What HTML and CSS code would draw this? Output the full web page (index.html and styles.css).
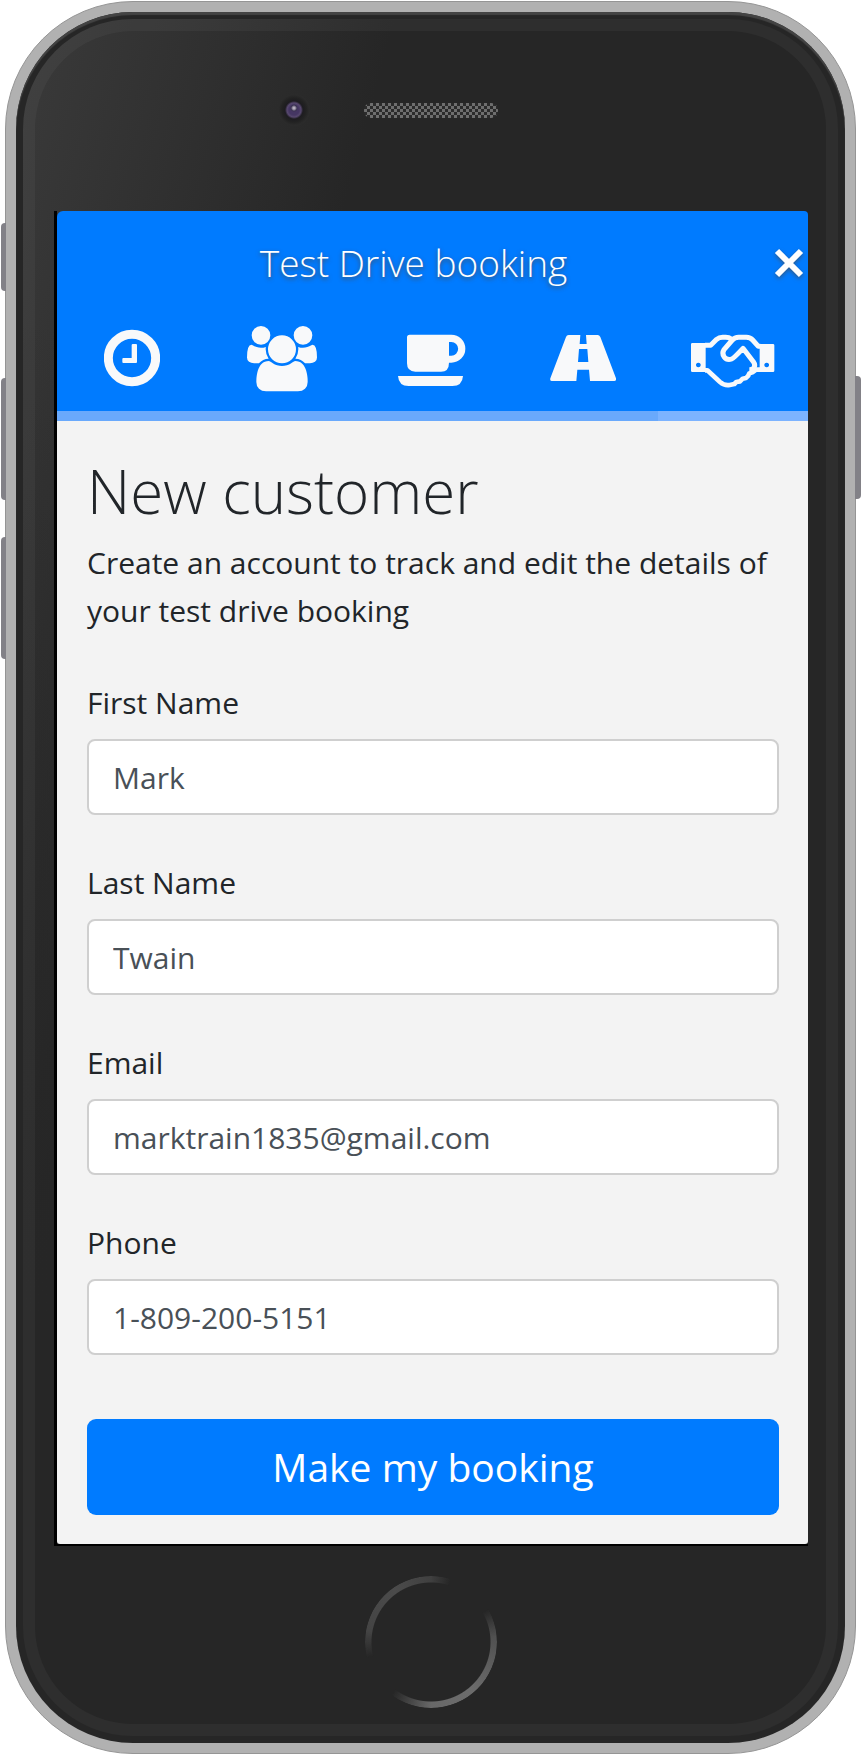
FILE: index.html
```
<!DOCTYPE html>
<html lang="en">
<head>
<meta charset="utf-8">
<meta name="viewport" content="width=device-width, initial-scale=1">
<title>Test Drive booking</title>
<link rel="stylesheet" href="styles.css">
</head>
<body>
<div class="phone">
  <span class="side-key key-mute"></span>
  <span class="side-key key-up"></span>
  <span class="side-key key-down"></span>
  <span class="side-key key-power"></span>
  <div class="shell">
    <div class="face">
      <div class="bezel-top">
        <span class="camera"></span>
        <svg class="speaker" viewBox="0 0 134 15" aria-hidden="true">
          <defs><pattern id="mesh" width="6" height="6" patternUnits="userSpaceOnUse"><rect width="6" height="6" fill="#2b2b2b"/><rect width="3" height="3" fill="#6e6e6e"/><rect x="3" y="3" width="3" height="3" fill="#6e6e6e"/></pattern></defs>
          <rect width="134" height="15" rx="7" fill="url(#mesh)"/>
        </svg>
      </div>
      <div class="screen">
        <header class="header">
          <div class="title-row">
            <h1 class="title">Test Drive booking</h1>
            <button class="close" type="button" aria-label="Close">
              <svg width="30" height="30" viewBox="0 0 30 30" aria-hidden="true"><path d="M3 3L27 27M27 3L3 27" stroke="#fff" stroke-width="6"/></svg>
            </button>
          </div>
          <div class="steps">
            <svg width="56" height="66" viewBox="192 378 168 198" aria-hidden="true"><circle cx="276" cy="474" r="71" fill="none" stroke="#f8f9fa" stroke-width="27"/><path fill="#f8f9fa" d="M279 432h9q3 0 3 3v51q0 3-3 3h-38q-3 0-3-3v-9q0-3 3-3h25v-39q0-3 4-3z"/></svg>
            <svg width="70" height="66" viewBox="-64 0 1920 1810" aria-hidden="true"><path fill="#f8f9fa" d="M529 896q-162 5-265 128h-134q-82 0-138-40.5t-56-118.5q0-353 124-353 6 0 43.5 21t97.5 42.5 119 21.5q67 0 133-23-5 37-5 66 0 139 81 256zm1071 637q0 120-73 189.5t-194 69.5h-874q-121 0-194-69.5t-73-189.5q0-53 3.5-103.5t14-109 26.5-108.5 43-97.5 62-81 85.5-53.5 111.5-20q10 0 43 21.5t73 48 107 48 135 21.5 135-21.5 107-48 73-48 43-21.5q61 0 111.5 20t85.5 53.5 62 81 43 97.5 26.5 108.5 14 109 3.5 103.5zm-1024-1277q0 106-75 181t-181 75-181-75-75-181 75-181 181-75 181 75 75 181zm704 384q0 159-112.5 271.5t-271.5 112.5-271.5-112.5-112.5-271.5 112.5-271.5 271.5-112.5 271.5 112.5 112.5 271.5zm576 225q0 78-56 118.5t-138 40.5h-134q-103-123-265-128 81-117 81-256 0-29-5-66 66 23 133 23 59 0 119-21.5t97.5-42.5 43.5-21q124 0 124 353zm-128-609q0 106-75 181t-181 75-181-75-75-181 75-181 181-75 181 75 75 181z"/></svg>
            <svg width="68" height="66" viewBox="22 3 204 198" aria-hidden="true"><path fill="#f8f9fa" fill-rule="evenodd" d="M57 29H182a42 42 0 0 1 0 84H175q0 27-24 27H74q-25 0-25-25V37q0-8 8-8zM175 51v41h7a20 20 0 0 0 0-41z"/><path fill="#f8f9fa" d="M22 153H217q-2 30-32 30H54q-30 0-32-30z"/></svg>
            <svg width="66" height="66" viewBox="477 3 198 198" aria-hidden="true"><path fill="#f8f9fa" fill-rule="evenodd" d="M533 30H620q5 0 8 6L675 160q1 8-5 8H483q-7 0-5-8L525 36q2-6 8-6zM568 30l-2 27h21l-2-27zM564 72l-3 39h31l-3-39zM559 134l-3 34h41l-3-34z"/></svg>
            <svg width="84" height="66" viewBox="16 -12 252 198" aria-hidden="true"><path fill="#f8f9fa" fill-rule="evenodd" d="M20 39H60V126H20q-4 0-4-4V43q0-4 4-4zM38 98a7 7 0 1 0 .1 0zM222 42H262q4 0 4 4V122q0 4-4 4H222zM243 98a7 7 0 1 0 .1 0z"/><path fill="none" stroke="#f8f9fa" stroke-width="15" stroke-linejoin="round" d="M58 46H75L93 28Q100 22 111 22H120Q130 22 137 27M224 49H218L201 30Q194 22 182 22H159Q147 22 140 30L115 59Q108 70 115 80Q124 92 138 87Q144 85 172 55L203 95Q210 105 205 113Q201 119 191 119"/><path fill="none" stroke="#f8f9fa" stroke-width="14" stroke-linejoin="round" d="M58 121H65L103 156Q117 168 132 165L146 162L152 156L163 154L171 146L181 144Q189 138 191 130L202 126L211 119H224"/></svg>
          </div>
        </header>
        <div class="progress"><div class="progress-done"></div></div>
        <form class="form">
          <h2 class="heading">New customer</h2>
          <p class="lead">Create an account to track and edit the details of your test drive booking</p>
          <div class="field"><label for="first">First Name</label><input id="first" type="text" value="Mark"></div>
          <div class="field"><label for="last">Last Name</label><input id="last" type="text" value="Twain"></div>
          <div class="field"><label for="email">Email</label><input id="email" type="email" value="marktrain1835@gmail.com"></div>
          <div class="field"><label for="phone">Phone</label><input id="phone" type="tel" value="1-809-200-5151"></div>
          <button class="submit" type="button">Make my booking</button>
        </form>
      </div>
      <div class="bezel-bottom"><span class="home"></span></div>
    </div>
  </div>
</div>
</body>
</html>
```
FILE: styles.css
```
* { box-sizing: border-box; }
body {
  margin: 0;
  background: #fff;
  color: #212529;
  font-family: "Open Sans", "Noto Sans", sans-serif;
  font-size: 30px;
  line-height: 48px;
}
.phone {
  position: relative;
  margin: 1px 6px 0 5px;
  padding: 10px;
  background: #b1b1b1;
  border: 1px solid #959595;
  border-radius: 128px;
}
.side-key {
  position: absolute;
  left: -5px;
  width: 5px;
  border-radius: 4px 0 0 4px;
  background: #828187;
}
.key-mute { top: 221px; height: 68px; }
.key-up { top: 376px; height: 122px; }
.key-down { top: 535px; height: 122px; }
.key-power {
  left: auto;
  right: -6px;
  top: 374px;
  width: 6px;
  height: 123px;
  border-radius: 0 4px 4px 0;
}
.shell {
  padding: 7px;
  background: #262626;
  border-radius: 117px;
  box-shadow: inset 0 3px 1px #444;
}
.face {
  border: 12px solid rgba(255, 255, 255, 0.04);
  border-radius: 110px;
  background: linear-gradient(to bottom, transparent 300px, #262626 1300px) border-box,
    linear-gradient(105deg, #3a3a3a 0, #262626 360px) border-box;
}
.bezel-top {
  display: grid;
  grid-template-columns: 1fr 134px 1fr;
  align-items: center;
  height: 180px;
  padding-bottom: 22px;
}
.camera {
  justify-self: end;
  width: 32px;
  height: 32px;
  margin-right: 54px;
  border-radius: 50%;
  background: radial-gradient(circle at 50% 44%, #b5aebd 0 1px, #3b3352 3px, transparent 4px),
    radial-gradient(circle, #453663 0 5px, #57486f 7px, #1d1c20 9px, #222 12px, #2d2d2d 16px);
}
.speaker { display: block; width: 134px; height: 15px; }
.screen {
  margin: 0 18px 0 19px;
  border-left: 3px solid #000;
  border-bottom: 2px solid #000;
}
.header {
  padding: 28px 0 19px;
  border-radius: 6px 4px 0 0;
  background: #007bff;
}
.title-row { display: flex; align-items: center; }
.title {
  flex: 1;
  margin: 0;
  color: #fff;
  font-size: 37px;
  font-weight: 300;
  text-align: center;
  text-shadow: 0 2px 4px rgba(80, 70, 60, 0.8);
}
.close {
  display: flex;
  padding: 0 4px;
  border: 0;
  background: none;
  filter: drop-shadow(0 2px 2px rgba(80, 70, 60, 0.6));
}
.steps {
  display: grid;
  grid-template-columns: repeat(5, 1fr);
  justify-items: center;
  margin-top: 39px;
}
.steps svg { display: block; }
.progress { height: 10px; background: #7cb3ff; }
.progress-done { width: 80%; height: 100%; background: #69a9fc; }
.form {
  padding: 34px 29px 29px 30px;
  border-radius: 0 0 3px 3px;
  background: #f3f3f3;
}
.heading {
  margin: 0 0 12px;
  font-size: 60px;
  font-weight: 300;
  line-height: 72px;
}
.lead { margin: 0; }
.field {
  display: flex;
  flex-direction: column;
  gap: 12px;
  margin-top: 44px;
}
.field input {
  width: 100%;
  height: 76px;
  padding: 0 24px;
  border: 2px solid #cfcfcf;
  border-radius: 8px;
  background: #fff;
  color: #495057;
  font: inherit;
}
.submit {
  display: block;
  width: 100%;
  height: 96px;
  margin-top: 64px;
  border: 0;
  border-radius: 9px;
  background: #007bff;
  color: #fff;
  font: inherit;
  font-size: 39px;
}
.bezel-bottom {
  display: flex;
  justify-content: center;
  padding: 30px 0 16px;
}
.home {
  width: 132px;
  height: 132px;
  border-radius: 50%;
  background: conic-gradient(#404040 0deg, transparent 18deg, transparent 60deg, #505050 85deg, #6c6c6c 140deg, #686868 180deg, transparent 217deg, transparent 256deg, #444 280deg, #4b4b4b 325deg, #404040 360deg);
  -webkit-mask: radial-gradient(circle, transparent 59px, #000 60px);
  mask: radial-gradient(circle, transparent 59px, #000 60px);
}
```
